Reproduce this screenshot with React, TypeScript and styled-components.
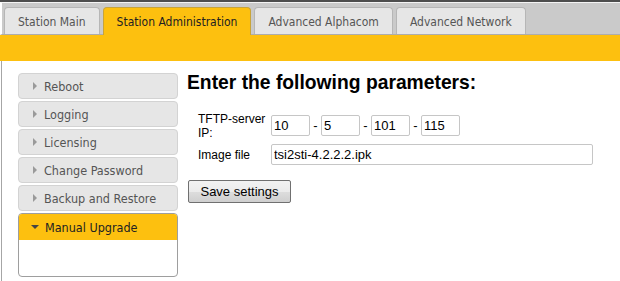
import React from "react";
import styled, { createGlobalStyle } from "styled-components";

const Global = createGlobalStyle`
  html, body { margin: 0; padding: 0; background: #fff; overflow: hidden; }
  * { box-sizing: border-box; }
`;

const YELLOW = "#fdc00f";

const Page = styled.div`
  width: 620px;
  height: 281px;
  display: flex;
  flex-direction: column;
  font-family: "DejaVu Sans Condensed", "DejaVu Sans", sans-serif;
`;

const TopStrip = styled.div`
  height: 2px;
  background: #4e4e4e;
`;

const TabBar = styled.div`
  height: 33px;
  display: flex;
  align-items: flex-end;
  gap: 3px;
  background: #cacaca;
  border-top: 1px solid #f4f4f4;
  border-left: 2px solid #fff;
  border-bottom: 1px solid #adadad;
  padding-left: 2px;
`;

const Tab = styled.div<{ $active?: boolean }>`
  display: flex;
  align-items: center;
  padding: 1px 13px 0;
  font-size: 12px;
  color: ${(p) => (p.$active ? "#222" : "#555")};
  background: ${(p) => (p.$active ? YELLOW : "#e6e6e6")};
  border: 1px solid ${(p) => (p.$active ? "#c8a43a" : "#b6b6b6")};
  border-bottom: none;
  border-radius: 4px 4px 0 0;
  margin-bottom: ${(p) => (p.$active ? "-1px" : "0")};
  height: ${(p) => (p.$active ? "28px" : "27px")};
`;

const Band = styled.div`
  height: 26px;
  background: ${YELLOW};
`;

const Main = styled.div`
  flex: 1;
  display: flex;
  margin-left: 1px;
  border-left: 1px solid #a6a6a6;
`;

const Sidebar = styled.div`
  width: 176px;
  padding: 12px 0 0 16px;
  display: flex;
  flex-direction: column;
  gap: 2px;
`;

const MenuItem = styled.div`
  height: 26px;
  display: flex;
  align-items: center;
  padding-left: 14px;
  background: #e6e6e6;
  border: 1px solid #d3d3d3;
  border-radius: 4px;
  font-size: 12.5px;
  color: #555;
`;

const Arrow = styled.span<{ $down?: boolean }>`
  width: 0;
  height: 0;
  margin-right: 7px;
  ${(p) =>
    p.$down
      ? `border-left: 4px solid transparent; border-right: 4px solid transparent; border-top: 4px solid #444; margin-left: -1px; margin-right: 6px;`
      : `border-top: 4px solid transparent; border-bottom: 4px solid transparent; border-left: 4px solid #9a9a9a;`}
`;

const ActiveBox = styled.div`
  height: 64px;
  border: 1px solid #9e9e9e;
  border-radius: 4px;
  overflow: hidden;
  display: flex;
  flex-direction: column;
`;

const ActiveHead = styled.div`
  height: 26px;
  display: flex;
  align-items: center;
  padding-left: 13px;
  background: ${YELLOW};
  font-size: 12.5px;
  color: #222;
`;

const Content = styled.div`
  flex: 1;
  padding: 10px 0 0 9px;
  font-family: "Liberation Sans", Arial, sans-serif;
`;

const Heading = styled.h1`
  margin: 0;
  font-size: 19.3px;
  font-weight: bold;
  color: #000;
  line-height: 23px;
`;

const Form = styled.div`
  margin: 18px 0 0 11px;
  display: grid;
  grid-template-columns: 73px auto;
  row-gap: 4px;
  align-items: center;
`;

const Label = styled.div`
  font-size: 12px;
  line-height: 14px;
  color: #000;
`;

const IpRow = styled.div`
  display: flex;
  align-items: center;
  align-self: start;
  padding-top: 3px;
`;

const Dash = styled.span`
  width: 11px;
  text-align: center;
  font-size: 13px;
`;

const Input = styled.input<{ $w: number }>`
  width: ${(p) => p.$w}px;
  height: 21px;
  border: 1px solid #c6c6c6;
  border-radius: 2px;
  padding: 0 2px;
  font-family: "Liberation Sans", Arial, sans-serif;
  font-size: 13px;
  color: #000;
  outline: none;
`;

const Button = styled.button`
  margin: 15px 0 0 1px;
  width: 103px;
  height: 23px;
  border: 1px solid #707070;
  border-radius: 2px;
  background: linear-gradient(#f2f2f2, #ebebeb 50%, #dddddd 51%, #cfcfcf);
  font-family: "Liberation Sans", Arial, sans-serif;
  font-size: 13px;
  color: #000;
  padding: 0;
`;

const tabs = ["Station Main", "Station Administration", "Advanced Alphacom", "Advanced Network"];
const menu = ["Reboot", "Logging", "Licensing", "Change Password", "Backup and Restore"];

export default function App() {
  return (
    <>
      <Global />
      <Page>
        <TopStrip />
        <TabBar>
          {tabs.map((t, i) => (
            <Tab key={t} $active={i === 1}>
              {t}
            </Tab>
          ))}
        </TabBar>
        <Band />
        <Main>
          <Sidebar>
            {menu.map((m) => (
              <MenuItem key={m}>
                <Arrow />
                {m}
              </MenuItem>
            ))}
            <ActiveBox>
              <ActiveHead>
                <Arrow $down />
                Manual Upgrade
              </ActiveHead>
            </ActiveBox>
          </Sidebar>
          <Content>
            <Heading>Enter the following parameters:</Heading>
            <Form>
              <Label>
                TFTP-server
                <br />
                IP:
              </Label>
              <IpRow>
                <Input $w={39} defaultValue="10" />
                <Dash>-</Dash>
                <Input $w={39} defaultValue="5" />
                <Dash>-</Dash>
                <Input $w={39} defaultValue="101" />
                <Dash>-</Dash>
                <Input $w={39} defaultValue="115" />
              </IpRow>
              <Label>Image file</Label>
              <Input $w={322} defaultValue="tsi2sti-4.2.2.2.ipk" />
            </Form>
            <Button>Save settings</Button>
          </Content>
        </Main>
      </Page>
    </>
  );
}
